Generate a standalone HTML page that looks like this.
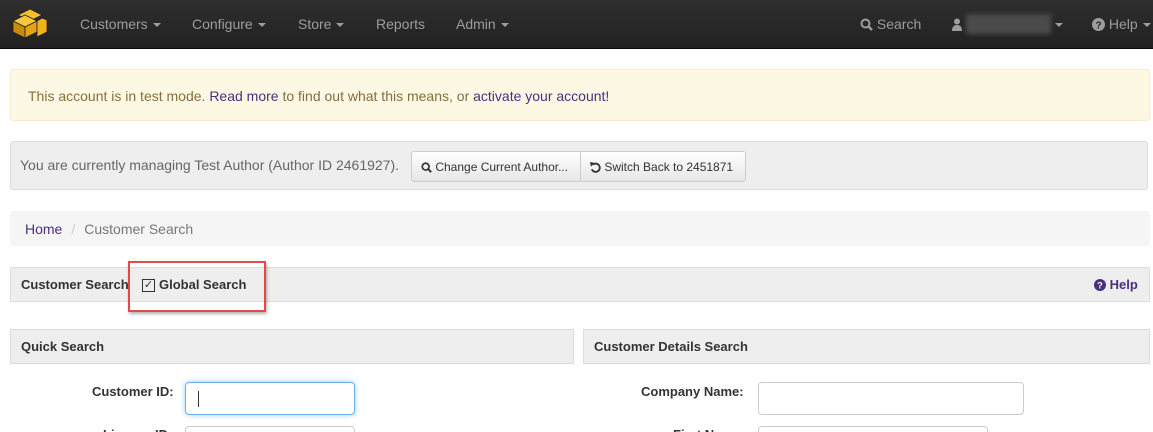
<!DOCTYPE html>
<html><head><meta charset="utf-8"><style>
*{box-sizing:border-box;margin:0;padding:0}
html,body{width:1153px;height:432px;overflow:hidden}
body{background:#fff;font-family:"Liberation Sans",Arial,sans-serif;font-size:14px;color:#333;position:relative}
.nav{position:absolute;left:0;top:0;width:1153px;height:49px;background:linear-gradient(#2e2e2e,#222);border-bottom:1px solid #080808}
.nav span{position:absolute;top:16px;color:#9d9d9d;font-size:14px}
.car{display:inline-block;width:0;height:0;border-left:4px solid transparent;border-right:4px solid transparent;border-top:4px solid #9d9d9d;vertical-align:middle;margin-left:5px}
.abs{position:absolute}
a{color:#4a2f7f;text-decoration:none}
svg{vertical-align:-2px}
</style></head><body>
<div class="nav">
<svg class="abs" style="left:11px;top:8px" width="38" height="32" viewBox="0 0 38 32">
<polygon points="19,1 31,7 19,13 7,7" fill="#f6bd24" stroke="#222" stroke-width=".8"/>
<polygon points="2,13 14,7 26,13 14,19" fill="#f8c73e" stroke="#222" stroke-width=".8"/>
<polygon points="2,13 14,19 14,30 2,24" fill="#c88b0b" stroke="#222" stroke-width=".8"/>
<polygon points="14,19 26,13 26,24 14,30" fill="#e4a412" stroke="#222" stroke-width=".8"/>
<polygon points="26,13 31,10 36,12 36,24 26,29" fill="#f0b21a" stroke="#222" stroke-width=".8"/>
</svg>
<span style="left:80px">Customers<i class="car"></i></span>
<span style="left:192px">Configure<i class="car"></i></span>
<span style="left:298px">Store<i class="car"></i></span>
<span style="left:376px">Reports</span>
<span style="left:456px">Admin<i class="car"></i></span>
<span style="left:860px"><svg width="13" height="13" viewBox="0 0 13 13"><circle cx="5.5" cy="5.5" r="4" fill="none" stroke="#9d9d9d" stroke-width="2"/><line x1="8.5" y1="8.5" x2="12" y2="12" stroke="#9d9d9d" stroke-width="2.4"/></svg> Search</span>
<span style="left:952px"><svg width="10" height="13" viewBox="0 0 10 13"><circle cx="5" cy="3.5" r="3" fill="#9d9d9d"/><path d="M0 13 Q0 7 5 7 Q10 7 10 13Z" fill="#9d9d9d"/></svg></span>
<div class="abs" style="left:966px;top:14px;width:85px;height:20px;background:#4a4a4a;filter:blur(2px)"></div>
<span style="left:1050px"><i class="car"></i></span>
<span style="left:1092px"><svg width="13" height="13" viewBox="0 0 13 13"><circle cx="6.5" cy="6.5" r="6.5" fill="#9d9d9d"/><text x="6.5" y="10.5" font-size="10" font-weight="bold" text-anchor="middle" fill="#222" font-family="Liberation Sans">?</text></svg> Help<i class="car"></i></span>
</div>
<div class="abs" style="left:10px;top:69px;width:1140px;height:52px;background:#fcf8e3;border:1px solid #faebcc;border-radius:4px;color:#8a6d3b;padding:18px 17px">This account is in test mode. <a href="#">Read more</a> to find out what this means, or <a href="#">activate your account!</a></div>
<div class="abs" style="left:10px;top:141px;width:1138px;height:49px;background:#eee;border:1px solid #ddd;border-radius:3px;color:#666;padding:15px 9px">You are currently managing Test Author (Author ID 2461927).</div>
<div class="abs" style="left:411px;top:151px;width:335px;height:31px;border:1px solid #ccc;border-radius:3px;background:linear-gradient(#fff,#e6e6e6);font-size:12px;color:#333">
<span class="abs" style="left:9px;top:8px"><svg width="11" height="11" viewBox="0 0 13 13"><circle cx="5.5" cy="5.5" r="4" fill="none" stroke="#333" stroke-width="2"/><line x1="8.5" y1="8.5" x2="12" y2="12" stroke="#333" stroke-width="2.4"/></svg> Change Current Author...</span>
<div class="abs" style="left:168px;top:0;width:1px;height:29px;background:#ccc"></div>
<span class="abs" style="left:178px;top:8px"><svg width="11" height="11" viewBox="0 0 12 12"><path d="M3 3 A4.5 4.5 0 1 1 2 8" fill="none" stroke="#333" stroke-width="2"/><polygon points="0,0 5,1 1,5" fill="#333"/></svg> Switch Back to 2451871</span>
</div>
<div class="abs" style="left:10px;top:211px;width:1140px;height:35px;background:#f5f5f5;border-radius:4px;padding:10px 15px"><a href="#">Home</a><span style="color:#ccc;padding:0 9px">/</span><span style="color:#777">Customer Search</span></div>
<div class="abs" style="left:10px;top:267px;width:1140px;height:35px;background:#eee;border:1px solid #ddd;padding:9px 10px;font-weight:bold;font-size:13px">Customer Search</div>
<div class="abs" style="left:128px;top:261px;width:138px;height:51px;border:2px solid #e04a4a;box-shadow:1px 2px 3px rgba(0,0,0,.3)"></div>
<div class="abs" style="left:142px;top:279px;width:13px;height:13px;border:1px solid #333;font-size:11px;line-height:11px;text-align:center">&#10003;</div>
<span class="abs" style="left:159px;top:277px;font-weight:bold;font-size:13px">Global Search</span>
<span class="abs" style="left:1094px;top:277px;font-weight:bold;font-size:13px;color:#4a2f7f"><svg width="12" height="12" viewBox="0 0 13 13"><circle cx="6.5" cy="6.5" r="6.5" fill="#4a2f7f"/><text x="6.5" y="10.5" font-size="10" font-weight="bold" text-anchor="middle" fill="#fff" font-family="Liberation Sans">?</text></svg> Help</span>
<div class="abs" style="left:10px;top:329px;width:564px;height:35px;background:#eee;border:1px solid #ddd;padding:9px 10px;font-weight:bold;font-size:13px">Quick Search</div>
<div class="abs" style="left:583px;top:329px;width:567px;height:35px;background:#eee;border:1px solid #ddd;padding:9px 10px;font-weight:bold;font-size:13px">Customer Details Search</div>
<span class="abs" style="left:92px;top:384px;font-weight:bold;font-size:13px">Customer ID:</span>
<div class="abs" style="left:185px;top:382px;width:170px;height:33px;border:1px solid #66afe9;border-radius:4px;box-shadow:0 0 6px rgba(102,175,233,.6)"><div class="abs" style="left:12px;top:8px;width:1px;height:16px;background:#333"></div></div>
<span class="abs" style="left:103px;top:427px;font-weight:bold;font-size:13px">License ID:</span>
<div class="abs" style="left:185px;top:426px;width:170px;height:30px;border:1px solid #ccc;border-radius:4px"></div>
<span class="abs" style="left:641px;top:384px;font-weight:bold;font-size:13px">Company Name:</span>
<div class="abs" style="left:758px;top:382px;width:266px;height:33px;border:1px solid #ccc;border-radius:4px"></div>
<span class="abs" style="left:673px;top:427px;font-weight:bold;font-size:13px">First Name:</span>
<div class="abs" style="left:758px;top:426px;width:230px;height:30px;border:1px solid #ccc;border-radius:4px"></div>
</body></html>
